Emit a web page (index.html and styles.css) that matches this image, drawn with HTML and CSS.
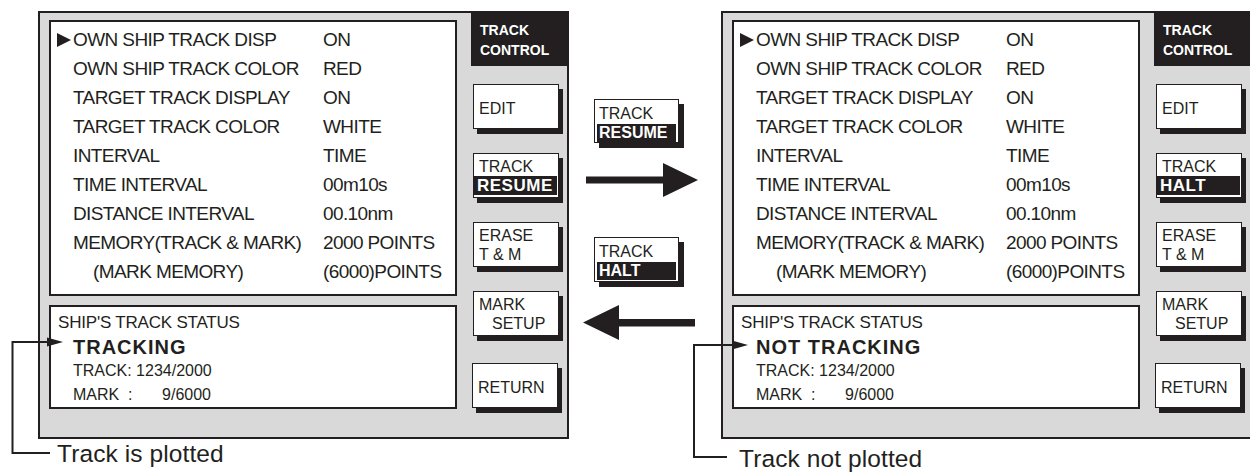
FILE: index.html
```html
<!DOCTYPE html>
<html lang="en">
<head>
    <meta charset="UTF-8">
    <meta name="viewport" content="width=device-width, initial-scale=1.0">
    <title>Track control</title>
    <link rel="stylesheet" href="styles.css">
</head>
<body>
    <div class="page">
        <figure class="screen screen-left">
            <div class="panel">
                <div class="main">
                    <div class="menu">
                        <div class="row"><span class="mark"><i class="tri"></i></span><span class="label">OWN SHIP TRACK DISP</span><span class="value">ON</span></div>
                        <div class="row"><span class="mark"></span><span class="label">OWN SHIP TRACK COLOR</span><span class="value">RED</span></div>
                        <div class="row"><span class="mark"></span><span class="label">TARGET TRACK DISPLAY</span><span class="value">ON</span></div>
                        <div class="row"><span class="mark"></span><span class="label">TARGET TRACK COLOR</span><span class="value">WHITE</span></div>
                        <div class="row"><span class="mark"></span><span class="label">INTERVAL</span><span class="value">TIME</span></div>
                        <div class="row"><span class="mark"></span><span class="label">TIME INTERVAL</span><span class="value">00m10s</span></div>
                        <div class="row"><span class="mark"></span><span class="label">DISTANCE INTERVAL</span><span class="value">00.10nm</span></div>
                        <div class="row"><span class="mark"></span><span class="label">MEMORY(TRACK &amp; MARK)</span><span class="value">2000 POINTS</span></div>
                        <div class="row"><span class="mark"></span><span class="label sub">(MARK MEMORY)</span><span class="value">(6000)POINTS</span></div>
                    </div>
                    <div class="status">
                        <div class="status-head">SHIP'S TRACK STATUS</div>
                        <div class="status-state">TRACKING</div>
                        <div class="status-line">TRACK: 1234/2000</div>
                        <div class="status-line status-mark"><span>MARK&nbsp;&nbsp;:</span><span>9/6000</span></div>
                    </div>
                </div>
                <div class="side">
                    <div class="title">TRACK<br>CONTROL</div>
                    <div class="key key-one"><span>EDIT</span></div>
                    <div class="key"><span>TRACK</span><span class="inv">RESUME</span></div>
                    <div class="key"><span>ERASE</span><span>T &amp; M</span></div>
                    <div class="key"><span>MARK</span><span class="indent">SETUP</span></div>
                    <div class="key key-one key-last"><span>RETURN</span></div>
                </div>
            </div>
            <figcaption class="caption">Track is plotted</figcaption>
        </figure>

        <div class="middle">
            <div class="mini"><span>TRACK</span><span class="inv">RESUME</span></div>
            <svg class="arrow arrow-right" width="112" height="34" viewBox="0 0 112 34">
                <path d="M0 13.5 H77 V0 L112 17 L77 34 V20.5 H0 Z" fill="#231f20"/>
            </svg>
            <div class="mini mini-halt"><span>TRACK</span><span class="inv">HALT</span></div>
            <svg class="arrow arrow-left" width="112" height="35" viewBox="0 0 112 35">
                <path d="M112 14 H36 V0 L0 17.5 L36 35 V21.5 H112 Z" fill="#231f20"/>
            </svg>
        </div>

        <figure class="screen screen-right">
            <div class="panel">
                <div class="main">
                    <div class="menu">
                        <div class="row"><span class="mark"><i class="tri"></i></span><span class="label">OWN SHIP TRACK DISP</span><span class="value">ON</span></div>
                        <div class="row"><span class="mark"></span><span class="label">OWN SHIP TRACK COLOR</span><span class="value">RED</span></div>
                        <div class="row"><span class="mark"></span><span class="label">TARGET TRACK DISPLAY</span><span class="value">ON</span></div>
                        <div class="row"><span class="mark"></span><span class="label">TARGET TRACK COLOR</span><span class="value">WHITE</span></div>
                        <div class="row"><span class="mark"></span><span class="label">INTERVAL</span><span class="value">TIME</span></div>
                        <div class="row"><span class="mark"></span><span class="label">TIME INTERVAL</span><span class="value">00m10s</span></div>
                        <div class="row"><span class="mark"></span><span class="label">DISTANCE INTERVAL</span><span class="value">00.10nm</span></div>
                        <div class="row"><span class="mark"></span><span class="label">MEMORY(TRACK &amp; MARK)</span><span class="value">2000 POINTS</span></div>
                        <div class="row"><span class="mark"></span><span class="label sub">(MARK MEMORY)</span><span class="value">(6000)POINTS</span></div>
                    </div>
                    <div class="status">
                        <div class="status-head">SHIP'S TRACK STATUS</div>
                        <div class="status-state">NOT TRACKING</div>
                        <div class="status-line">TRACK: 1234/2000</div>
                        <div class="status-line status-mark"><span>MARK&nbsp;&nbsp;:</span><span>9/6000</span></div>
                    </div>
                </div>
                <div class="side">
                    <div class="title">TRACK<br>CONTROL</div>
                    <div class="key key-one"><span>EDIT</span></div>
                    <div class="key"><span>TRACK</span><span class="inv">HALT</span></div>
                    <div class="key"><span>ERASE</span><span>T &amp; M</span></div>
                    <div class="key"><span>MARK</span><span class="indent">SETUP</span></div>
                    <div class="key key-one key-last"><span>RETURN</span></div>
                </div>
            </div>
            <figcaption class="caption caption-low">Track not plotted</figcaption>
        </figure>

        <!-- leader lines from the captions to the status text -->
        <svg class="leaders" width="1250" height="476" viewBox="0 0 1250 476">
            <g fill="none" stroke="#231f20" stroke-width="2">
                <polyline points="50,453 12.5,453 12.5,342 50,342"/>
                <polyline points="727,457 694,457 694,345 735,345"/>
            </g>
            <g fill="#231f20">
                <polygon points="47,337.5 63,342 47,346.5"/>
                <polygon points="732,340.5 748,345 732,349.5"/>
            </g>
        </svg>
    </div>
</body>
</html>
```

FILE: styles.css
```css
body {
    margin: 0;
    background-color: #ffffff;
    color: #231f20;
    font-family: "Liberation Sans", Arial, sans-serif;
    overflow: hidden;
}
.page {
    position: relative;
    display: flex;
    align-items: flex-start;
    width: 1250px;
    height: 476px;
    padding-top: 11px;
    box-sizing: border-box;
    overflow: hidden;
}
.screen {
    margin: 0;
    flex: 0 0 531px;
    width: 531px;
}
.screen-left {
    margin-left: 38px;
}
.panel {
    display: flex;
    height: 428px;
    padding-left: 9px;
    box-sizing: border-box;
    border: 2px solid #231f20;
    background-color: #d9d9d9;
}
.main {
    width: 408px;
    margin-top: 7px;
}
.menu {
    height: 276px;
    box-sizing: border-box;
    padding: 3px 0 0 6px;
    border: 2px solid #231f20;
    background-color: #ffffff;
    font-size: 19px;
    letter-spacing: -0.6px;
}
.row {
    display: flex;
    height: 29px;
    line-height: 29px;
    white-space: nowrap;
}
.mark {
    width: 16px;
    flex: 0 0 16px;
}
.tri {
    display: inline-block;
    width: 0;
    height: 0;
    border-left: 14px solid #231f20;
    border-top: 7px solid transparent;
    border-bottom: 7px solid transparent;
    vertical-align: -1px;
}
.label {
    width: 250px;
    flex: 0 0 250px;
}
.label.sub {
    padding-left: 20px;
    width: 230px;
    flex-basis: 230px;
}
.status {
    height: 104px;
    margin-top: 9px;
    box-sizing: border-box;
    padding: 4px 0 0 7px;
    border: 2px solid #231f20;
    background-color: #ffffff;
    line-height: 24px;
}
.status-head {
    font-size: 17px;
    letter-spacing: -0.2px;
}
.status-state {
    padding-left: 15px;
    font-size: 20px;
    font-weight: 700;
    letter-spacing: 1px;
}
.status-line {
    padding-left: 15px;
    font-size: 16px;
}
.status-mark {
    display: flex;
    justify-content: space-between;
    width: 138px;
}
.side {
    width: 96px;
    margin-left: 14px;
    display: flex;
    flex-direction: column;
}
.title {
    height: 53px;
    box-sizing: border-box;
    padding: 7px 0 0 9px;
    background-color: #231f20;
    color: #ffffff;
    font-size: 14px;
    font-weight: 700;
    line-height: 20px;
}
.key {
    width: 86px;
    height: 45px;
    margin: 24px 0 0 2px;
    box-sizing: border-box;
    padding-top: 3px;
    border: 1.5px solid #231f20;
    background-color: #ffffff;
    box-shadow: 4px 5px 0 #231f20;
    display: flex;
    flex-direction: column;
    font-size: 16px;
    line-height: 19px;
}
.key span {
    padding-left: 5px;
}
.key-one {
    justify-content: center;
    padding-top: 4px;
}
.title + .key {
    margin-top: 18px;
}
.key-last {
    margin-left: 1px;
    margin-top: 27px;
}
.key .inv,
.mini .inv {
    background-color: #231f20;
    color: #ffffff;
    font-weight: 700;
    padding-left: 3px;
    margin-right: 1px;
}
.key .inv {
    font-size: 17px;
    letter-spacing: 0.5px;
}
.key .indent {
    padding-left: 18px;
}
.caption {
    margin: 1px 0 0 19px;
    font-size: 24.5px;
    line-height: 28px;
    letter-spacing: 0.1px;
}
.caption-low {
    margin-top: 6px;
    margin-left: 18px;
}
.middle {
    flex: 0 0 152px;
    display: flex;
    flex-direction: column;
    align-items: flex-start;
    padding-top: 88px;
}
.mini {
    width: 85px;
    height: 44px;
    margin-left: 25px;
    box-sizing: border-box;
    padding: 5px 0 0 0;
    border: 1.5px solid #231f20;
    background-color: #ffffff;
    box-shadow: 5px 5px 0 #231f20;
    display: flex;
    flex-direction: column;
    font-size: 16px;
    line-height: 18px;
}
.mini span {
    padding-left: 4px;
}
.mini .inv {
    margin: 1px 2px 0 2px;
    padding-left: 2px;
}
.mini-halt {
    height: 45px;
    margin-top: 40px;
}
.arrow {
    display: block;
}
.arrow-right {
    margin: 20px 0 0 17px;
}
.arrow-left {
    margin: 23px 0 0 14px;
}
.leaders {
    position: absolute;
    left: 0;
    top: 0;
    pointer-events: none;
}
```
